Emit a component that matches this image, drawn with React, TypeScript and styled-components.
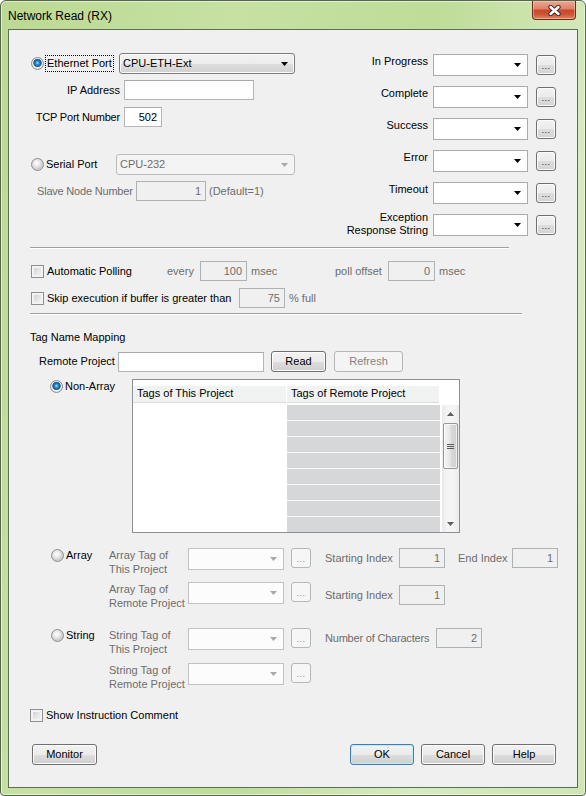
import React from 'react';
import styled, { createGlobalStyle, css } from 'styled-components';

const GlobalStyle = createGlobalStyle`
  html, body { margin: 0; padding: 0; }
  body {
    width: 586px; height: 796px; overflow: hidden; background: #ffffff;
    font-family: "Liberation Sans", Arial, sans-serif; font-size: 11px; color: #000;
  }
  *, *::before, *::after { box-sizing: border-box; }
`;

const Window = styled.div`
  width: 586px; height: 796px; display: flex; flex-direction: column;
  border: 1px solid #56664c; border-radius: 6px 6px 4px 4px;
  background: linear-gradient(105deg, #bcd993 0%, #c6e1a2 30%, #bfdc98 55%, #d6ebbf 78%, #cfe5b2 100%);
  box-shadow: inset 0 0 0 1px rgba(255, 255, 255, 0.55);
  overflow: hidden;
`;

const TitleBar = styled.div`
  height: 28px; flex-shrink: 0; display: flex; align-items: flex-start; justify-content: space-between;
`;

const Title = styled.div`
  padding: 8px 0 0 7px; font-size: 12px; line-height: 14px; color: #000;
`;

const CloseButton = styled.div`
  width: 44px; height: 19px; margin-right: 9px;
  border: 1px solid #6e2c1f; border-top: none; border-radius: 0 0 4px 4px;
  background: linear-gradient(#eaa994 0%, #df8268 42%, #c8482c 52%, #cd5535 75%, #e08a63 100%);
  box-shadow: inset 0 0 0 1px rgba(255, 215, 195, 0.45);
  display: flex; align-items: center; justify-content: center;
`;

const Client = styled.div`
  flex: 1; margin: 0 7px 7px; border: 1px solid #5f6b5a; background: #f0f0f0;
  padding: 23px 0 0 21px; display: flex; flex-direction: column;
`;

const Content = styled.div`
  width: 528px; display: flex; flex-direction: column;
`;

const Row = styled.div<{ $mt?: number; $align?: string }>`
  display: flex; align-items: ${p => p.$align || 'center'}; margin-top: ${p => p.$mt || 0}px;
`;

const TopSection = styled.div`
  display: flex; align-items: flex-start;
`;

const PortColumn = styled.div`
  width: 298px; display: flex; flex-direction: column;
`;

const StatusColumn = styled.div`
  margin-top: 1px; display: flex; flex-direction: column; gap: 10px;
`;

const StatusRow = styled.div`
  display: flex; align-items: center;
`;

const StatusLabel = styled.span<{ $twoLine?: boolean }>`
  width: 100px; margin-right: 5px; text-align: right; line-height: 13px; white-space: nowrap;
  ${p => p.$twoLine ? css`margin-top: -3px; margin-bottom: -1px;` : css`align-self: flex-start; padding-top: 1px;`}
`;

const Text = styled.span<{ $dim?: boolean; $w?: number; $right?: boolean; $pl?: number; $pr?: number; $ml?: number; $tight?: boolean }>`
  display: inline-block; flex-shrink: 0; white-space: nowrap; line-height: 13px;
  color: ${p => (p.$dim ? '#6d6d6d' : '#000')};
  ${p => p.$w !== undefined && css`width: ${p.$w}px;`}
  ${p => p.$tight && css`letter-spacing: -0.2px;`}
  text-align: ${p => (p.$right ? 'right' : 'left')};
  padding-left: ${p => p.$pl || 0}px; padding-right: ${p => p.$pr || 0}px; margin-left: ${p => p.$ml || 0}px;
`;

const TwoLineLabel = styled.span`
  width: 79px; flex-shrink: 0; line-height: 14px; color: #6d6d6d; white-space: nowrap;
`;

const SectionTitle = styled.div<{ $mt: number }>`
  margin-top: ${p => p.$mt}px; line-height: 13px;
`;

const RadioField = styled.div<{ $w: number; $pl: number; $top?: boolean }>`
  width: ${p => p.$w}px; flex-shrink: 0; display: flex; align-items: center; gap: 2px;
  padding-left: ${p => p.$pl}px;
  ${p => p.$top && css`align-self: flex-start; margin-top: 1px;`}
`;

const Radio = styled.span<{ $checked?: boolean }>`
  width: 13px; height: 13px; border-radius: 50%; flex-shrink: 0; border: 1px solid #8e8f8f;
  background: ${p =>
    p.$checked
      ? 'radial-gradient(circle at 50% 45%, #a6e8ff 0px, #2d98da 1.6px, #11609f 3.2px, #3c6d94 3.9px, #f6f6f6 4.6px, #d9d9d9 6px)'
      : 'radial-gradient(circle at 42% 38%, #ffffff 0px, #eeeeee 2.5px, #cdcdcd 6px)'};
`;

const FocusLabel = styled.span`
  outline: 1px dotted #000; outline-offset: 0px; padding: 1px 1px; line-height: 13px; white-space: nowrap;
`;

const CheckField = styled.div<{ $w?: number; $pl?: number }>`
  ${p => p.$w !== undefined && css`width: ${p.$w}px;`}
  flex-shrink: 0; display: flex; align-items: center; gap: 3px; padding-left: ${p => p.$pl ?? 1}px;
  line-height: 13px; white-space: nowrap;
`;

const CheckBox = styled.span`
  width: 13px; height: 13px; flex-shrink: 0; border: 1px solid #8e8f8f;
  background: linear-gradient(135deg, #c4c8cd 0%, #e6e7e9 55%, #f8f8f8 100%);
  box-shadow: inset 0 0 0 2px #f3f3f3;
`;

const TextBox = styled.div<{ $w: number; $disabled?: boolean }>`
  width: ${p => p.$w}px; height: 20px; flex-shrink: 0; padding: 0 4px;
  text-align: right; line-height: 18px; white-space: nowrap;
  ${p =>
    p.$disabled
      ? css`border: 1px solid #adb2b5; background: #f0f0f0; color: #6d6d6d;`
      : css`border: 1px solid #b3b5b9; border-top-color: #a6a9ae; background: #ffffff; color: #000;`}
`;

type ComboVariant = 'button' | 'buttonDisabled' | 'edit' | 'editDisabled';

const Combo = styled.div<{ $w: number; $h: number; $variant: ComboVariant }>`
  width: ${p => p.$w}px; height: ${p => p.$h}px; flex-shrink: 0;
  display: flex; align-items: center; padding: 0 6px 0 3px; line-height: 13px; white-space: nowrap;
  ${p => {
    switch (p.$variant) {
      case 'button':
        return css`
          border: 1px solid #7b7b7b; border-radius: 3px; color: #000;
          background: linear-gradient(#f3f3f3 0%, #ececec 50%, #dedede 51%, #d1d1d1 100%);
          box-shadow: inset 0 0 0 1px #fbfbfb;
        `;
      case 'buttonDisabled':
        return css`
          border: 1px solid #b8bcbf; border-radius: 3px; color: #6d6d6d; background: #f4f4f4;
        `;
      case 'edit':
        return css`border: 1px solid #a9abb0; background: #ffffff; color: #000;`;
      default:
        return css`border: 1px solid #c0c3c6; background: #fcfcfc; color: #6d6d6d;`;
    }
  }}
`;

const ComboText = styled.span`
  flex: 1;
`;

const DotsButton = styled.div<{ $disabled?: boolean }>`
  width: 20px; height: 20px; flex-shrink: 0; border-radius: 3px;
  display: flex; align-items: flex-end; justify-content: center; padding-bottom: 4px;
  font-size: 9px; line-height: 8px; letter-spacing: 0.5px;
  ${p =>
    p.$disabled
      ? css`border: 1px solid #b3b7ba; background: #f6f6f6; color: #8a8a8a;`
      : css`
          border: 1px solid #707070; color: #1a2a4a;
          background: linear-gradient(#f2f2f2 0%, #ebebeb 50%, #dddddd 51%, #d3d3d3 100%);
          box-shadow: inset 0 0 0 1px #fcfcfc;
        `}
`;

const PushButton = styled.div<{ $w: number; $ml?: number; $kind?: 'normal' | 'default' | 'disabled' }>`
  width: ${p => p.$w}px; height: 21px; flex-shrink: 0; margin-left: ${p => p.$ml || 0}px;
  border-radius: 3px; display: flex; align-items: center; justify-content: center; line-height: 13px;
  ${p =>
    p.$kind === 'disabled'
      ? css`border: 1px solid #b3b7ba; background: #f4f4f4; color: #838383;`
      : css`
          border: 1px solid ${p.$kind === 'default' ? '#3c7fb1' : '#707070'}; color: #000;
          background: linear-gradient(#f2f2f2 0%, #ebebeb 50%, #dddddd 51%, #cfcfcf 100%);
          box-shadow: inset 0 0 0 1px ${p.$kind === 'default' ? '#bfe9fb' : '#fcfcfc'};
        `}
`;

const Separator = styled.div<{ $w: number; $mt: number }>`
  width: ${p => p.$w}px; margin-top: ${p => p.$mt}px; height: 2px;
  border-top: 1px solid #a0a0a0; border-bottom: 1px solid #ffffff;
`;

const Grid = styled.div`
  width: 328px; height: 154px; flex-shrink: 0; border: 1px solid #8c8f94; background: #ffffff;
  display: flex; flex-direction: column;
`;

const GridHeader = styled.div`
  height: 24px; flex-shrink: 0; display: flex;
`;

const HeaderCell = styled.div<{ $w: number }>`
  width: ${p => p.$w}px; height: 100%; padding: 7px 0 0 4px; line-height: 13px; white-space: nowrap;
  background: linear-gradient(#ffffff 0px, #ffffff 6px, #f1f2f2 6px, #f1f2f2 22px, #dcdcdc 22px, #dcdcdc 23px, #ffffff 23px);
  border-right: 1px solid #ffffff;
`;

const GridBody = styled.div`
  flex: 1; display: flex; margin-top: 1px; min-height: 0;
`;

const ThisColumn = styled.div`
  width: 154px; background: #ffffff;
`;

const RemoteColumn = styled.div`
  width: 153px; background: repeating-linear-gradient(to bottom, #d6d7d9 0px, #d6d7d9 15px, #ffffff 15px, #ffffff 16px);
`;

const ScrollBar = styled.div`
  flex: 1; margin-left: 2px; display: flex; flex-direction: column; align-items: center;
  background: linear-gradient(to right, #e9e9e9, #f4f4f4 30%, #f4f4f4 70%, #ebebeb);
`;

const ScrollArrow = styled.div`
  height: 17px; width: 100%; display: flex; align-items: center; justify-content: center; flex-shrink: 0;
`;

const ScrollThumb = styled.div`
  width: 15px; height: 46px; margin-top: 1px; border: 1px solid #979797; border-radius: 2px;
  background: linear-gradient(to right, #f3f3f3 0%, #e8e8e8 45%, #d9d9d9 55%, #d0d0d0 100%);
  box-shadow: inset 0 0 0 1px rgba(255, 255, 255, 0.7);
  display: flex; align-items: center; justify-content: center;
`;

const Grip = styled.div`
  width: 7px; height: 5px; background: repeating-linear-gradient(#5a5a5a 0px, #5a5a5a 1px, transparent 1px, transparent 2px);
`;

const ScrollSpacer = styled.div`
  flex: 1;
`;

const FieldGroup = styled.div<{ $ml: number; $mt?: number }>`
  display: flex; align-items: center; margin-left: ${p => p.$ml}px; margin-top: ${p => p.$mt || 0}px;
`;

const ButtonBar = styled.div`
  width: 526px; margin-top: 22px; display: flex; align-items: center; padding-left: 2px;
`;

const BarSpacer = styled.div`
  flex: 1;
`;

const Triangle: React.FC<{ dir: 'up' | 'down'; color: string }> = ({ dir, color }) => (
  <svg width="7" height="4" viewBox="0 0 7 4" style={{ display: 'block', flexShrink: 0 }}>
    <polygon points={dir === 'down' ? '0,0 7,0 3.5,4' : '0,4 7,4 3.5,0'} fill={color} />
  </svg>
);

const DropArrow = ({ dim }: { dim?: boolean }) => <Triangle dir="down" color={dim ? '#a8a8a8' : '#000'} />;

const CloseGlyph = () => (
  <svg width="15" height="11" viewBox="0 0 15 11">
    <path d="M3.5 2 L11.5 9 M11.5 2 L3.5 9" stroke="#3b3030" strokeWidth="4.4" strokeLinecap="round" />
    <path d="M3.5 2 L11.5 9 M11.5 2 L3.5 9" stroke="#ffffff" strokeWidth="2.4" strokeLinecap="round" />
  </svg>
);

const statusRows = ['In Progress', 'Complete', 'Success', 'Error', 'Timeout'];

export default function App() {
  return (
    <>
      <GlobalStyle />
      <Window>
        <TitleBar>
          <Title>Network Read (RX)</Title>
          <CloseButton>
            <CloseGlyph />
          </CloseButton>
        </TitleBar>
        <Client>
          <Content>
            <TopSection>
              <PortColumn>
                <Row>
                  <RadioField $w={89} $pl={1}>
                    <Radio $checked />
                    <FocusLabel>Ethernet Port</FocusLabel>
                  </RadioField>
                  <Combo $w={176} $h={21} $variant="button">
                    <ComboText>CPU-ETH-Ext</ComboText>
                    <DropArrow />
                  </Combo>
                </Row>
                <Row $mt={6}>
                  <Text $w={94} $right $pr={4}>IP Address</Text>
                  <TextBox $w={130} />
                </Row>
                <Row $mt={7}>
                  <Text $w={94} $right $pr={4} $tight>TCP Port Number</Text>
                  <TextBox $w={38}>502</TextBox>
                </Row>
                <Row $mt={27}>
                  <RadioField $w={86} $pl={1}>
                    <Radio />
                    <Text>Serial Port</Text>
                  </RadioField>
                  <Combo $w={179} $h={21} $variant="buttonDisabled">
                    <ComboText>CPU-232</ComboText>
                    <DropArrow dim />
                  </Combo>
                </Row>
                <Row $mt={6}>
                  <Text $w={106} $pl={7} $dim $tight>Slave Node Number</Text>
                  <TextBox $w={70} $disabled>1</TextBox>
                  <Text $dim $ml={3}>(Default=1)</Text>
                </Row>
              </PortColumn>
              <StatusColumn>
                {statusRows.map(label => (
                  <StatusRow key={label}>
                    <StatusLabel>{label}</StatusLabel>
                    <Combo $w={95} $h={22} $variant="edit">
                      <ComboText />
                      <DropArrow />
                    </Combo>
                    <FieldGroup $ml={8}>
                      <DotsButton>...</DotsButton>
                    </FieldGroup>
                  </StatusRow>
                ))}
                <StatusRow>
                  <StatusLabel $twoLine>
                    Exception
                    <br />
                    Response String
                  </StatusLabel>
                  <Combo $w={95} $h={22} $variant="edit">
                    <ComboText />
                    <DropArrow />
                  </Combo>
                  <FieldGroup $ml={8}>
                    <DotsButton>...</DotsButton>
                  </FieldGroup>
                </StatusRow>
              </StatusColumn>
            </TopSection>

            <Separator $w={479} $mt={11} />

            <Row $mt={12}>
              <CheckField $w={137}>
                <CheckBox />
                Automatic Polling
              </CheckField>
              <Text $w={33} $dim>every</Text>
              <TextBox $w={47} $disabled>100</TextBox>
              <Text $w={88} $pl={4} $dim>msec</Text>
              <Text $w={53} $dim>poll offset</Text>
              <TextBox $w={47} $disabled>0</TextBox>
              <Text $pl={4} $dim>msec</Text>
            </Row>
            <Row $mt={7}>
              <CheckField $w={209}>
                <CheckBox />
                Skip execution if buffer is greater than
              </CheckField>
              <TextBox $w={46} $disabled>75</TextBox>
              <Text $pl={4} $dim>% full</Text>
            </Row>

            <Separator $w={492} $mt={5} />

            <SectionTitle $mt={16}>Tag Name Mapping</SectionTitle>
            <Row $mt={7}>
              <Text $w={88} $pl={9}>Remote Project</Text>
              <TextBox $w={146} />
              <PushButton $w={55} $ml={7}>Read</PushButton>
              <PushButton $w={69} $ml={8} $kind="disabled">Refresh</PushButton>
            </Row>

            <Row $mt={7} $align="flex-start">
              <RadioField $w={102} $pl={20} $top>
                <Radio $checked />
                <Text>Non-Array</Text>
              </RadioField>
              <Grid>
                <GridHeader>
                  <HeaderCell $w={154}>Tags of This Project</HeaderCell>
                  <HeaderCell $w={153}>Tags of Remote Project</HeaderCell>
                </GridHeader>
                <GridBody>
                  <ThisColumn />
                  <RemoteColumn />
                  <ScrollBar>
                    <ScrollArrow>
                      <Triangle dir="up" color="#5c5c5c" />
                    </ScrollArrow>
                    <ScrollThumb>
                      <Grip />
                    </ScrollThumb>
                    <ScrollSpacer />
                    <ScrollArrow>
                      <Triangle dir="down" color="#5c5c5c" />
                    </ScrollArrow>
                  </ScrollBar>
                </GridBody>
              </Grid>
            </Row>

            <Row $mt={15} $align="flex-start">
              <RadioField $w={79} $pl={21} $top>
                <Radio />
                <Text>Array</Text>
              </RadioField>
              <TwoLineLabel>
                Array Tag of
                <br />
                This Project
              </TwoLineLabel>
              <Combo $w={96} $h={22} $variant="editDisabled">
                <ComboText />
                <DropArrow dim />
              </Combo>
              <FieldGroup $ml={7}>
                <DotsButton $disabled>...</DotsButton>
              </FieldGroup>
              <FieldGroup $ml={14}>
                <Text $w={74} $dim>Starting Index</Text>
                <TextBox $w={46} $disabled>1</TextBox>
                <Text $w={67} $pl={13} $dim>End Index</Text>
                <TextBox $w={46} $disabled>1</TextBox>
              </FieldGroup>
            </Row>
            <Row $mt={6} $align="flex-start">
              <RadioField $w={79} $pl={21} $top />
              <TwoLineLabel>
                Array Tag of
                <br />
                Remote Project
              </TwoLineLabel>
              <Combo $w={96} $h={22} $variant="editDisabled">
                <ComboText />
                <DropArrow dim />
              </Combo>
              <FieldGroup $ml={7}>
                <DotsButton $disabled>...</DotsButton>
              </FieldGroup>
              <FieldGroup $ml={14} $mt={3}>
                <Text $w={74} $dim>Starting Index</Text>
                <TextBox $w={46} $disabled>1</TextBox>
              </FieldGroup>
            </Row>

            <Row $mt={18} $align="flex-start">
              <RadioField $w={79} $pl={21} $top>
                <Radio />
                <Text>String</Text>
              </RadioField>
              <TwoLineLabel>
                String Tag of
                <br />
                This Project
              </TwoLineLabel>
              <Combo $w={96} $h={22} $variant="editDisabled">
                <ComboText />
                <DropArrow dim />
              </Combo>
              <FieldGroup $ml={7}>
                <DotsButton $disabled>...</DotsButton>
              </FieldGroup>
              <FieldGroup $ml={14}>
                <Text $w={111} $dim $tight>Number of Characters</Text>
                <TextBox $w={46} $disabled>2</TextBox>
              </FieldGroup>
            </Row>
            <Row $mt={7} $align="flex-start">
              <RadioField $w={79} $pl={21} $top />
              <TwoLineLabel>
                String Tag of
                <br />
                Remote Project
              </TwoLineLabel>
              <Combo $w={96} $h={22} $variant="editDisabled">
                <ComboText />
                <DropArrow dim />
              </Combo>
              <FieldGroup $ml={7}>
                <DotsButton $disabled>...</DotsButton>
              </FieldGroup>
            </Row>

            <Row $mt={18}>
              <CheckField $pl={0}>
                <CheckBox />
                Show Instruction Comment
              </CheckField>
            </Row>

            <ButtonBar>
              <PushButton $w={65}>Monitor</PushButton>
              <BarSpacer />
              <PushButton $w={64} $kind="default">OK</PushButton>
              <PushButton $w={64} $ml={7}>Cancel</PushButton>
              <PushButton $w={64} $ml={7}>Help</PushButton>
            </ButtonBar>
          </Content>
        </Client>
      </Window>
    </>
  );
}
